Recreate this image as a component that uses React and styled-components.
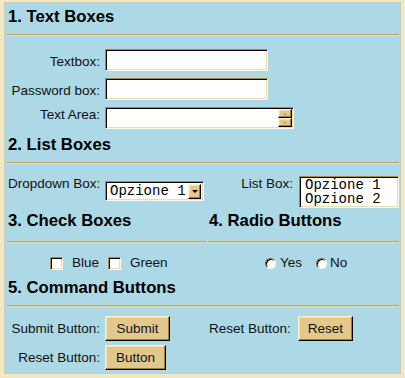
import React from 'react';
import styled, { createGlobalStyle, css } from 'styled-components';

const Global = createGlobalStyle`
  html, body { margin: 0; padding: 0; }
  body {
    background: #f4e7c3;
    font-family: "Liberation Sans", Arial, sans-serif;
    color: #111;
  }
`;

const inset = css`
  box-sizing: border-box;
  border: 1px solid;
  border-color: #a8894f #fff8e6 #fff8e6 #a8894f;
  box-shadow: inset 1px 1px 0 #000, inset -1px -1px 0 #ecdcae;
`;

const raised = css`
  box-sizing: border-box;
  background: #e3c88e;
  border: 1px solid;
  border-color: #fdf1d2 #000 #000 #fdf1d2;
  box-shadow: inset -1px -1px 0 #9c7c44, inset 1px 1px 0 #f1dfb4;
`;

const Frame = styled.div`
  width: 405px;
  height: 378px;
  box-sizing: border-box;
  padding: 2px 4px 4px 4px;
  background: #f4e7c3;
`;

const Panel = styled.div`
  height: 100%;
  box-sizing: border-box;
  background: #add8e6;
  border: 1px solid #c6cfbd;
  display: flex;
  flex-direction: column;
`;

const Heading = styled.h2`
  margin: ${(p) => p.$mt || 0}px 0 0 ${(p) => (p.$ml ?? 3)}px;
  font: bold 16.7px/20px "Liberation Sans", Arial, sans-serif;
  color: #000;
  white-space: nowrap;
`;

const Rule = styled.div`
  height: 0;
  border-top: 1px solid #c4a15a;
  border-bottom: 1px solid #e9d9a8;
  margin: ${(p) => p.$mt ?? 7}px 1px 0 ${(p) => (p.$ml ?? 2)}px;
`;

const FieldGrid = styled.div`
  display: grid;
  grid-template-columns: 95px auto;
  column-gap: 5px;
  row-gap: 7px;
  margin-top: ${(p) => p.$mt || 0}px;
  justify-content: start;
  align-items: start;
`;

const Label = styled.label`
  font-size: 13.5px;
  line-height: 16px;
  color: #111;
  white-space: nowrap;
  text-align: ${(p) => (p.$left ? 'left' : 'right')};
  align-self: ${(p) => (p.$top ? 'start' : p.$center ? 'center' : 'end')};
  padding-bottom: ${(p) => (p.$top || p.$center ? 0 : 1)}px;
  width: ${(p) => (p.$w ? `${p.$w}px` : 'auto')};
  flex: none;
`;

const TextInput = styled.input`
  ${inset};
  width: 163px;
  height: 22px;
  background: #fff;
  padding: 0 3px;
  font: 13.5px "Liberation Sans", Arial, sans-serif;
  outline: none;
`;

const TextAreaBox = styled.div`
  ${inset};
  width: 189px;
  height: 22px;
  background: #fff;
  padding: 1px;
  display: flex;
`;

const TextAreaField = styled.textarea`
  flex: 1;
  border: 0;
  resize: none;
  overflow: hidden;
  background: transparent;
  outline: none;
  padding: 0 2px;
  font: 13.5px "Liberation Sans", Arial, sans-serif;
`;

const ScrollBar = styled.div`
  width: 14px;
  display: flex;
  flex-direction: column;
`;

const ScrollBtn = styled.div`
  ${raised};
  flex: 1;
  display: flex;
  align-items: center;
  justify-content: center;
`;

const Arrow = styled.span`
  width: 0;
  height: 0;
  border-left: ${(p) => p.$s || 3}px solid transparent;
  border-right: ${(p) => p.$s || 3}px solid transparent;
  ${(p) =>
    p.$up
      ? css`border-bottom: ${p.$s || 3}px solid ${p.$c || '#b39868'};`
      : css`border-top: ${p.$s || 3}px solid ${p.$c || '#b39868'};`}
`;

const TwoCol = styled.div`
  display: grid;
  grid-template-columns: 202px 1fr;
  align-items: start;
  margin-top: ${(p) => p.$mt || 0}px;
`;

const Cell = styled.div`
  display: flex;
  align-items: ${(p) => p.$align || 'flex-start'};
  justify-content: ${(p) => p.$justify || 'flex-start'};
  gap: ${(p) => p.$gap || 0}px;
  padding: 0 ${(p) => p.$pr || 0}px 0 ${(p) => p.$pl || 0}px;
`;

const Select = styled.div`
  ${inset};
  width: 99px;
  height: 20px;
  margin-top: 5px;
  background: #fff;
  display: flex;
  align-items: center;
  padding: 0 2px 0 4px;
  font: 14px/14px "Liberation Mono", "Courier New", monospace;
  color: #000;
`;

const SelectText = styled.span`
  flex: 1;
  white-space: pre;
`;

const DropBtn = styled.span`
  ${raised};
  width: 13px;
  height: 15px;
  display: flex;
  align-items: center;
  justify-content: center;
`;

const ListBox = styled.div`
  ${inset};
  width: 100px;
  height: 32px;
  background: #fff;
  padding: 1px 0 0 5px;
  font: 14px/14px "Liberation Mono", "Courier New", monospace;
  color: #000;
  white-space: pre;
`;

const OptionRow = styled.div`
  display: flex;
  align-items: center;
  height: 16px;
`;

const Check = styled.span`
  ${inset};
  display: inline-block;
  width: 13px;
  height: 13px;
  background: #fff;
  flex: none;
  margin-left: ${(p) => p.$ml || 0}px;
`;

const Radio = styled.span`
  display: inline-block;
  box-sizing: border-box;
  width: 11px;
  height: 11px;
  border-radius: 50%;
  background: #fff;
  border: 1px solid;
  border-color: #7d6536 #fff6df #fff6df #7d6536;
  box-shadow: inset 1px 1px 0 #000;
  flex: none;
  margin-left: ${(p) => p.$ml || 0}px;
`;

const OptText = styled.span`
  font-size: 13.5px;
  line-height: 16px;
  color: #111;
  margin-left: ${(p) => p.$ml || 0}px;
`;

const Button = styled.button`
  ${raised};
  width: ${(p) => p.$w}px;
  height: 25px;
  padding: 0;
  font: 13.5px "Liberation Sans", Arial, sans-serif;
  color: #111;
  cursor: pointer;
`;

const ButtonGrid = styled.div`
  display: grid;
  grid-template-columns: 95px auto;
  column-gap: 5px;
  row-gap: 4px;
  justify-content: start;
  align-items: center;
`;

export default function App() {
  return (
    <>
      <Global />
      <Frame>
        <Panel>
          <Heading $mt={4}>1. Text Boxes</Heading>
          <Rule />
          <FieldGrid $mt={13}>
            <Label>Textbox:</Label>
            <TextInput type="text" />
            <Label>Password box:</Label>
            <TextInput type="password" />
            <Label $top>Text Area:</Label>
            <TextAreaBox>
              <TextAreaField />
              <ScrollBar>
                <ScrollBtn>
                  <Arrow $up $s={2.5} />
                </ScrollBtn>
                <ScrollBtn>
                  <Arrow $s={2.5} />
                </ScrollBtn>
              </ScrollBar>
            </TextAreaBox>
          </FieldGrid>

          <Heading $mt={6}>2. List Boxes</Heading>
          <Rule />
          <TwoCol $mt={12}>
            <Cell $pl={3}>
              <Label $left $top $w={97}>Dropdown Box:</Label>
              <Select>
                <SelectText>Opzione 1</SelectText>
                <DropBtn>
                  <Arrow $s={3} $c="#000" />
                </DropBtn>
              </Select>
            </Cell>
            <Cell $justify="flex-end" $gap={6} $pr={1}>
              <Label $top>List Box:</Label>
              <ListBox>
                {'Opzione 1\nOpzione 2'}
              </ListBox>
            </Cell>
          </TwoCol>

          <TwoCol $mt={3}>
            <Heading>3. Check Boxes</Heading>
            <Heading $ml={2}>4. Radio Buttons</Heading>
          </TwoCol>
          <TwoCol>
            <Rule $mt={10} />
            <Rule $mt={10} $ml={1} />
          </TwoCol>

          <TwoCol $mt={12}>
            <OptionRow>
              <Check $ml={45} />
              <OptText $ml={9}>Blue</OptText>
              <Check $ml={9} />
              <OptText $ml={9}>Green</OptText>
            </OptionRow>
            <OptionRow>
              <Radio $ml={58} />
              <OptText $ml={4}>Yes</OptText>
              <Radio $ml={14} />
              <OptText $ml={3}>No</OptText>
            </OptionRow>
          </TwoCol>

          <Heading $mt={7}>5. Command Buttons</Heading>
          <Rule />
          <TwoCol $mt={9}>
            <ButtonGrid>
              <Label $center>Submit Button:</Label>
              <Button type="button" $w={65}>Submit</Button>
              <Label $center>Reset Button:</Label>
              <Button type="button" $w={61}>Button</Button>
            </ButtonGrid>
            <Cell $pl={2} $gap={7} $align="center">
              <Label $center>Reset Button:</Label>
              <Button type="button" $w={55}>Reset</Button>
            </Cell>
          </TwoCol>
        </Panel>
      </Frame>
    </>
  );
}
